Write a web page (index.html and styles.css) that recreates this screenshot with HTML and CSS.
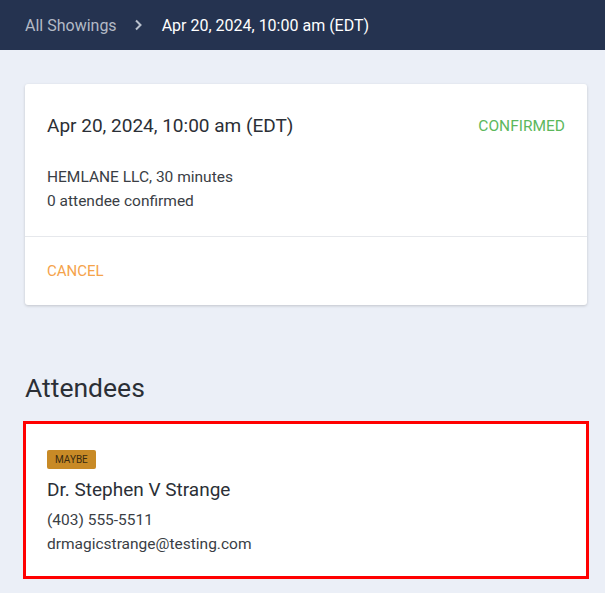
FILE: index.html
```html
<!DOCTYPE html>
<html lang="en">
<head>
    <meta charset="UTF-8">
    <meta name="viewport" content="width=device-width, initial-scale=1.0">
    <title>Showing</title>
    <link rel="stylesheet" href="styles.css">
</head>
<body>
    <!-- Breadcrumb bar -->
    <div class="topbar">
        <a class="crumb" href="#">All Showings</a>
        <svg class="chevron" width="10" height="12" viewBox="0 0 10 12"><path d="M3 1.5 L7.5 6 L3 10.5" fill="none" stroke="#b9c0cc" stroke-width="2"/></svg>
        <span class="crumb-current">Apr 20, 2024, 10:00 am (EDT)</span>
    </div>

    <div class="page">
        <!-- Showing summary -->
        <div class="card">
            <div class="card-body">
                <div class="card-head">
                    <h2 class="showing-title">Apr 20, 2024, 10:00 am (EDT)</h2>
                    <span class="status">CONFIRMED</span>
                </div>
                <p class="meta">HEMLANE LLC, 30 minutes</p>
                <p class="meta">0 attendee confirmed</p>
            </div>
            <div class="card-actions">
                <a class="cancel" href="#">CANCEL</a>
            </div>
        </div>

        <h2 class="section-title">Attendees</h2>
        <div class="attendee">
            <span class="badge">MAYBE</span>
            <div class="attendee-name">Dr. Stephen V Strange</div>
            <p class="meta">(403) 555-5511</p>
            <p class="meta">drmagicstrange@testing.com</p>
        </div>
    </div>
</body>
</html>
```

FILE: styles.css
```css
body {
    margin: 0;
    font-family: Roboto, "Open Sans", sans-serif;
    background-color: #ebeff7;
    color: #2b2f36;
}
.topbar {
    height: 50px;
    background-color: #253350;
    display: flex;
    align-items: center;
    padding-left: 25px;
    font-size: 16px;
}
.crumb {
    color: #b3bac6;
    text-decoration: none;
}
.chevron {
    margin: 0 19px 0 16px;
}
.crumb-current {
    color: #fff;
}
.page {
    padding: 34px 18px 20px 25px;
}
.card {
    background-color: #fff;
    border-radius: 3px;
    box-shadow: 0 1px 3px rgba(0,0,0,0.18);
}
.card-body {
    padding: 29px 22px 23px;
    border-bottom: 1px solid #e6e8ec;
}
.card-head {
    display: flex;
    justify-content: space-between;
    align-items: center;
    margin-bottom: 26px;
}
.showing-title {
    margin: 0;
    font-size: 19px;
    line-height: 26px;
    font-weight: 400;
}
.status {
    color: #5cb85c;
    font-size: 15.5px;
}
.meta {
    margin: 0;
    font-size: 15.5px;
    line-height: 24px;
    color: #3a3e45;
}
.card-actions {
    padding: 22px 22px 22px;
    line-height: 24px;
}
.cancel {
    color: #f5a34b;
    text-decoration: none;
    font-size: 15px;
}
.section-title {
    margin: 67px 0 17px;
    font-size: 26.5px;
    line-height: 32px;
    font-weight: 400;
}
.attendee {
    display: flex;
    flex-direction: column;
    align-items: flex-start;
    background-color: #fff;
    border: 3px solid #ff0000;
    margin: 0 -2px;
    padding: 26px 21px 20px;
}
.badge {
    background-color: #c88a26;
    color: #3a2a10;
    font-size: 10px;
    line-height: 19px;
    padding: 0 8px;
    border-radius: 2px;
}
.attendee-name {
    font-size: 19px;
    line-height: 26px;
    margin: 8px 0 5px;
}
```
